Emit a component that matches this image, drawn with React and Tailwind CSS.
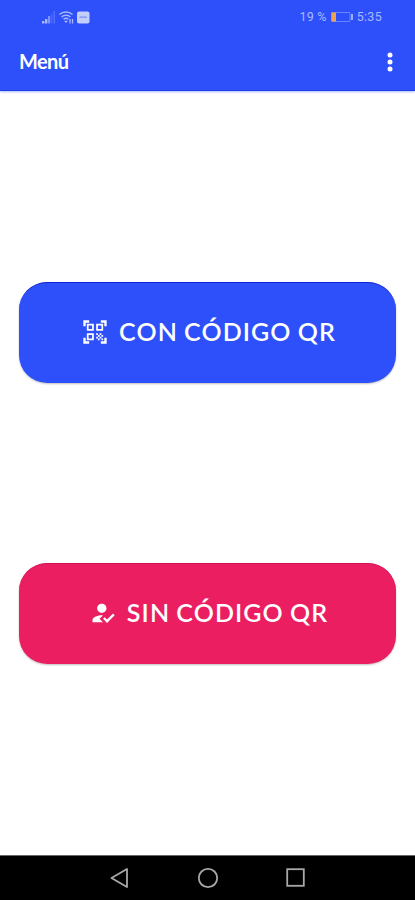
import React from 'react';
import { MdQrCodeScanner, MdHowToReg } from 'react-icons/md';

const StatusBar = () => (
  <div className="flex h-[34px] items-center justify-between pl-[42px] pr-[33px] text-[#a9b8ff]">
    <div className="flex items-center gap-[3px]">
      <svg width="14" height="13" viewBox="0 0 14 13" fill="currentColor">
        <rect x="0" y="10" width="2.4" height="2.5" />
        <rect x="3" y="8" width="2.4" height="4.5" />
        <rect x="6" y="5" width="2.2" height="7.5" opacity="0.65" />
        <rect x="9" y="3" width="1.5" height="9.5" opacity="0.2" />
        <rect x="11.5" y="0" width="1.5" height="12.5" opacity="0.3" />
      </svg>
      <svg width="15" height="13" viewBox="0 0 15 13" fill="none" stroke="currentColor" strokeWidth="1.5">
        <path d="M0.5 3.5C4 0.3 10 0.3 13.5 3.5" />
        <path d="M2.6 6C5 3.8 9 3.8 11.4 6" />
        <path d="M4.6 8.3C6 7 8 7 9.4 8.3" />
        <path d="M7 12L5 9.8h4z" fill="currentColor" stroke="none" />
        <path d="M11 8v4.5M13.5 8v4.5" strokeWidth="1.3" />
      </svg>
      <svg width="13" height="13" viewBox="0 0 13 13">
        <rect x="0" y="0.5" width="12.5" height="12" rx="2" fill="#c3cefb" />
        <path d="M2.5 6.2h7.5" stroke="#8b9df0" strokeWidth="1.6" />
      </svg>
    </div>
    <div className="flex items-center font-[Roboto,sans-serif] text-[12.5px] leading-none">
      <span className="tracking-[0.2px]">19 %</span>
      <svg className="ml-1 mr-[3px]" width="23" height="12" viewBox="0 0 23 12">
        <rect x="0.5" y="1.5" width="18.5" height="9" rx="1" fill="none" stroke="currentColor" strokeOpacity="0.5" />
        <rect x="0.5" y="1.5" width="4.5" height="9" fill="#efa34e" />
        <path d="M21 3v6" stroke="currentColor" strokeWidth="1.8" />
      </svg>
      <span className="tracking-[0.3px]">5:35</span>
    </div>
  </div>
);

const Toolbar = () => (
  <div className="flex h-14 items-center justify-between pl-[19px] pr-[22px] text-white">
    <h1 className="pb-0.5 text-[20px] font-bold leading-none tracking-[-0.6px]">Menú</h1>
    <button type="button" aria-label="Más opciones">
      <svg width="6" height="20" viewBox="0 0 6 20" fill="currentColor">
        <circle cx="3" cy="3" r="2.5" />
        <circle cx="3" cy="10" r="2.5" />
        <circle cx="3" cy="17" r="2.5" />
      </svg>
    </button>
  </div>
);

const MenuButton = ({ icon: Icon, label, className }) => (
  <button
    type="button"
    className={`flex h-[101px] w-full items-center justify-center gap-[10px] rounded-[28px] border-t pb-[3px] pl-[2px] text-white shadow-[0_1px_2px_rgba(0,0,0,0.25)] ${className}`}
  >
    <Icon size={28} />
    <span className="whitespace-nowrap text-[25px] font-semibold leading-none tracking-[1.1px] [word-spacing:-1.2px]">{label}</span>
  </button>
);

const NavigationBar = () => (
  <div className="flex h-[45px] items-center justify-between border-t border-[#666] bg-black pl-[110px] pr-[110px] text-[#a8a8a8]">
    <svg width="19" height="22" viewBox="0 0 19 22" fill="none" stroke="currentColor" strokeWidth="1.8" strokeLinejoin="round">
      <path d="M17 2v18L1.5 11z" />
    </svg>
    <svg width="22" height="22" viewBox="0 0 22 22" fill="none" stroke="currentColor" strokeWidth="1.8">
      <circle cx="11" cy="11" r="9.2" />
    </svg>
    <svg className="mb-px" width="19" height="19" viewBox="0 0 19 19" fill="none" stroke="currentColor" strokeWidth="1.8">
      <rect x="1.2" y="1.2" width="16.6" height="16.6" />
    </svg>
  </div>
);

const App = () => {
  return (
    <div className="flex h-[900px] w-[415px] flex-col overflow-hidden bg-white font-[Lato,sans-serif]">
      <header className="h-[91px] border-b border-[#1d3ee0] bg-[#2d50fb] shadow-[0_1px_2px_rgba(45,80,251,0.4)]">
        <StatusBar />
        <Toolbar />
      </header>
      <main className="flex flex-1 flex-col gap-[180px] px-[19px] pt-[191px]">
        <MenuButton
          icon={MdQrCodeScanner}
          label="CON CÓDIGO QR"
          className="border-[#0b24d5] bg-[#2d50fb]"
        />
        <MenuButton
          icon={MdHowToReg}
          label="SIN CÓDIGO QR"
          className="border-[#d30f50] bg-[#ec1e62]"
        />
      </main>
      <NavigationBar />
    </div>
  );
};

export default App;
